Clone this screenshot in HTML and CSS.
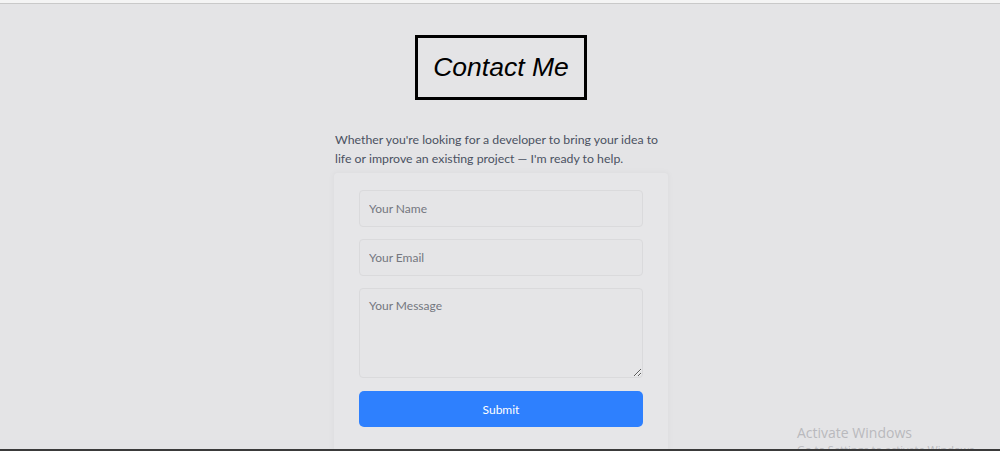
FILE: index.html
```html
<!DOCTYPE html>
<html lang="en">
<head>
  <meta charset="UTF-8">
  <meta name="viewport" content="width=device-width, initial-scale=1.0">
  <title>Contact Me</title>
  <link rel="stylesheet" href="styles.css">
</head>
<body>
  <div class="top-bar"></div>
  <main class="contact">
    <h1 class="contact-title">Contact Me</h1>
    <p class="contact-intro">Whether you're looking for a developer to bring your idea to life or improve an existing project — I'm ready to help.</p>
    <div class="contact-card">
      <form class="contact-form">
        <input type="text" name="name" placeholder="Your Name">
        <input type="email" name="email" placeholder="Your Email">
        <textarea name="message" placeholder="Your Message"></textarea>
        <button type="submit">Submit</button>
      </form>
    </div>
  </main>
  <div class="watermark">
    <div class="watermark-title">Activate Windows</div>
    <div class="watermark-sub">Go to Settings to activate Windows.</div>
  </div>
  <div class="bottom-bar"></div>
</body>
</html>
```

FILE: styles.css
```css
body {
  margin: 0;
  background-color: #e4e4e6;
  font-family: Lato, "Open Sans", Arial, sans-serif;
  color: #333;
  height: 451px;
  overflow: hidden;
  position: relative;
}
.top-bar {
  height: 3px;
  background: #f4f4f4;
  border-bottom: 1px solid #c9c9c9;
}
.contact {
  width: 336px;
  margin-left: calc(50% - 167px);
  display: flex;
  flex-direction: column;
  align-items: center;
}
.contact-title {
  margin: 31px 0 0;
  padding: 0 15px;
  height: 59px;
  line-height: 59px;
  border: 3px solid #000;
  font-family: "Liberation Sans", Arial, sans-serif;
  font-style: italic;
  font-weight: normal;
  font-size: 26.5px;
  color: #000;
}
.contact-intro {
  width: 324px;
  margin: 30px 0 0 2px;
  font-size: 12.3px;
  line-height: 19px;
  color: #4b5262;
  align-self: flex-start;
}
.contact-card {
  width: 336px;
  box-sizing: border-box;
  margin-top: 4px;
  padding: 17px 25px 30px;
  background: #e6e6e8;
  border: 1px solid #e0e0e2;
  border-radius: 4px;
  box-shadow: 0 0 6px rgba(0, 0, 0, 0.03);
}
.contact-form {
  display: flex;
  flex-direction: column;
  gap: 12px;
}
.contact-form input,
.contact-form textarea {
  box-sizing: border-box;
  width: 100%;
  padding: 9px 9px;
  font-family: inherit;
  font-size: 12px;
  color: #333;
  background: #e5e5e7;
  border: 1px solid #dadadc;
  border-radius: 4px;
}
.contact-form input {
  height: 37px;
}
.contact-form textarea {
  height: 90px;
  resize: vertical;
}
.contact-form ::placeholder {
  color: #74777f;
}
.contact-form button {
  height: 36px;
  margin-top: 1px;
  background: #2e80fe;
  color: #fff;
  border: none;
  border-radius: 5px;
  font-family: inherit;
  font-size: 12px;
  cursor: pointer;
}
.watermark {
  position: absolute;
  left: 797px;
  top: 423px;
  color: #b9b9bd;
  font-family: "Open Sans", "Noto Sans", sans-serif;
  white-space: nowrap;
}
.watermark-title {
  font-size: 14px;
  line-height: 20px;
}
.watermark-sub {
  font-size: 11px;
  line-height: 14px;
}
.bottom-bar {
  position: absolute;
  left: 0;
  right: 0;
  bottom: 0;
  height: 2px;
  background: #3a3a3a;
}
```
